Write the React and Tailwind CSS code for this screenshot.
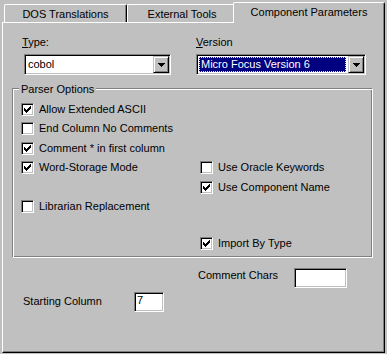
const sunken = 'border border-t-[#808080] border-l-[#808080] border-r-white border-b-white shadow-[inset_1px_1px_0_#000,inset_-1px_-1px_0_#c0c0c0]';

const Check = () => (
  <svg width="7" height="7" viewBox="0 0 7 7" shapeRendering="crispEdges" className="block">
    <path d="M0 2h1v3H0zM1 3h1v3H1zM2 4h1v3H2zM3 3h1v3H3zM4 2h1v3H4zM5 1h1v3H5zM6 0h1v3H6z" fill="#000" />
  </svg>
);

const Arrow = () => (
  <svg width="7" height="4" viewBox="0 0 7 4" shapeRendering="crispEdges" className="block">
    <path d="M0 0h7v1H0zM1 1h5v1H1zM2 2h3v1H2zM3 3h1v1H3z" fill="#000" />
  </svg>
);

const Checkbox = ({ checked, label, className = '' }) => (
  <div className={`flex h-[13px] items-center gap-[5px] ${className}`}>
    <div className={`flex h-[13px] w-[13px] shrink-0 items-center justify-center bg-white ${sunken}`}>
      {checked && <Check />}
    </div>
    <span className="whitespace-nowrap leading-[13px]">{label}</span>
  </div>
);

const DropButton = () => (
  <div className="flex h-[17px] w-[16px] shrink-0 items-center justify-center border border-t-[#c0c0c0] border-l-[#c0c0c0] border-r-black border-b-black bg-[#c0c0c0] shadow-[inset_1px_1px_0_#fff,inset_-1px_-1px_0_#808080]">
    <Arrow />
  </div>
);

const Tab = ({ children, className }) => (
  <div className={`rounded-t-[2px] border-t border-l border-r border-t-white border-l-white border-r-black bg-[#c0c0c0] pt-[3px] text-center leading-[13px] whitespace-nowrap shadow-[inset_-1px_0_0_#808080] ${className}`}>
    {children}
  </div>
);

const App = () => {
  return (
    <div className="h-[354px] w-[387px] overflow-hidden bg-[#c0c0c0] font-['Liberation_Sans',Arial,sans-serif] text-[11px] text-black">
      <div className="flex h-[22px] items-end">
        <Tab className="ml-[4px] h-[18px] w-[123px]">DOS Translations</Tab>
        <Tab className="h-[18px] w-[110px]">External Tools</Tab>
        <Tab className="relative z-10 -mb-[1px] -ml-[4px] h-[21px] w-[152px]">Component Parameters</Tab>
      </div>

      <div className="ml-[2px] h-[331px] w-[383px] border border-t-white border-l-white border-r-black border-b-black shadow-[inset_-1px_-1px_0_#808080]">
        <div className="mt-[13px] flex">
          <div className="ml-[19px] w-[150px]">
            <div className="h-[13px] leading-[13px]"><span className="underline">T</span>ype:</div>
            <div className={`ml-[2px] mt-[5px] flex h-[21px] w-[147px] bg-white p-[1px] ${sunken}`}>
              <div className="flex-1 pl-[2px] leading-[17px]">cobol</div>
              <DropButton />
            </div>
          </div>
          <div className="ml-[24px]">
            <div className="h-[13px] leading-[13px]"><span className="underline">V</span>ersion</div>
            <div className={`mt-[5px] flex h-[21px] w-[170px] bg-white p-[1px] ${sunken}`}>
              <div className="m-[1px] mr-[2px] flex-1 border border-dotted border-[#ffff00] bg-[#000080] pl-[1px] leading-[13px] text-white whitespace-nowrap">
                Micro Focus Version 6
              </div>
              <DropButton />
            </div>
          </div>
        </div>

        <div className="relative ml-[9px] mt-[13px] h-[170px] w-[361px] border border-t-[#808080] border-l-[#808080] border-r-white border-b-white shadow-[inset_1px_1px_0_#fff,inset_-1px_-1px_0_#808080]">
          <span className="absolute -top-[6px] left-[6px] bg-[#c0c0c0] px-[2px] leading-[13px]">Parser Options</span>
          <div className="flex pl-[8px] pt-[14px]">
            <div className="flex w-[179px] flex-col">
              <Checkbox checked label="Allow Extended ASCII" />
              <Checkbox label="End Column No Comments" className="mt-[6px]" />
              <Checkbox checked label="Comment * in first column" className="mt-[7px]" />
              <Checkbox checked label="Word-Storage Mode" className="mt-[6px]" />
              <Checkbox label="Librarian Replacement" className="mt-[26px]" />
            </div>
            <div className="flex flex-col">
              <Checkbox label="Use Oracle Keywords" className="mt-[58px]" />
              <Checkbox checked label="Use Component Name" className="mt-[7px]" />
              <Checkbox checked label="Import By Type" className="mt-[43px]" />
            </div>
          </div>
        </div>

        <div className="ml-[195px] mt-[10px] flex items-start">
          <div className="mt-[1px] w-[96px] leading-[13px]">Comment Chars</div>
          <div className={`h-[20px] w-[53px] bg-white ${sunken}`} />
        </div>

        <div className="ml-[20px] mt-[4px] flex items-start">
          <div className="mt-[3px] w-[111px] leading-[13px]">Starting Column</div>
          <div className={`h-[20px] w-[30px] bg-white pl-[2px] pt-[1px] leading-[13px] ${sunken}`}>7</div>
        </div>
      </div>
    </div>
  );
};

export default App;
